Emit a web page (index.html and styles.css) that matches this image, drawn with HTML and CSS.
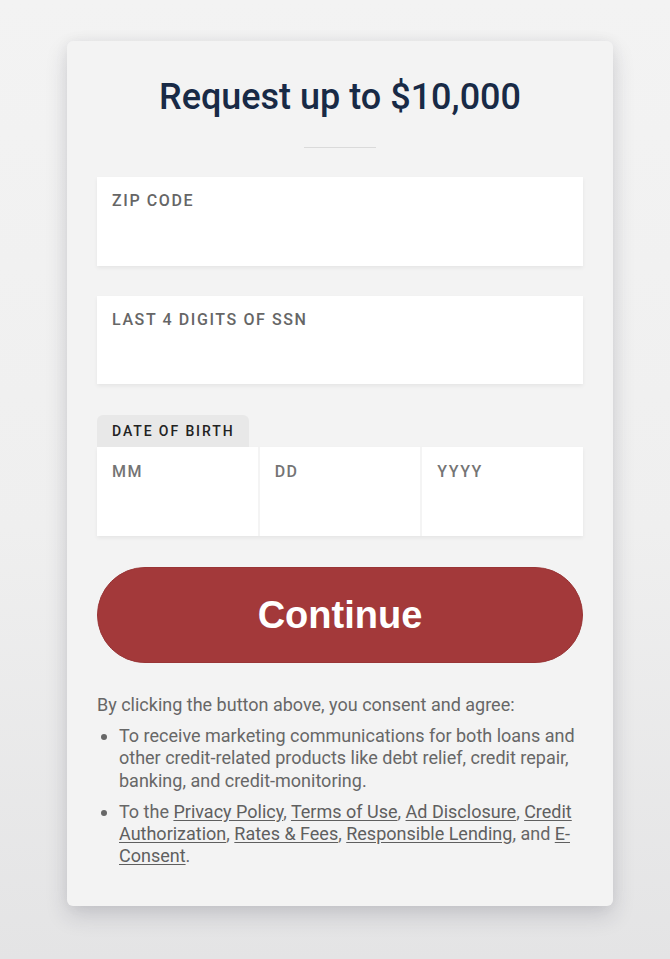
FILE: index.html
```html
<!DOCTYPE html>
<html lang="en">
<head>
<meta charset="utf-8">
<title>Request up to $10,000</title>
<link rel="stylesheet" href="styles.css">
</head>
<body>
<main class="page">
  <form class="card">
    <h1 class="title">Request up to $10,000</h1>
    <div class="divider"></div>

    <label class="field">
      <span class="field-label">ZIP CODE</span>
    </label>

    <label class="field field-ssn">
      <span class="field-label">LAST 4 DIGITS OF SSN</span>
    </label>

    <fieldset class="dob">
      <div class="dob-tab">DATE OF BIRTH</div>
      <div class="dob-row">
        <label class="dob-cell"><span class="dob-label">MM</span></label>
        <label class="dob-cell"><span class="dob-label">DD</span></label>
        <label class="dob-cell"><span class="dob-label">YYYY</span></label>
      </div>
    </fieldset>

    <button type="button" class="continue">Continue</button>

    <div class="consent">
      <p class="consent-lead">By clicking the button above, you consent and agree:</p>
      <ul class="consent-list">
        <li>To receive marketing communications for both loans and other credit-related products like debt relief, credit repair, banking, and credit-monitoring.</li>
        <li>To the <a href="#">Privacy Policy</a>, <a href="#">Terms of Use</a>, <a href="#">Ad Disclosure</a>, <a href="#">Credit Authorization</a>, <a href="#">Rates &amp; Fees</a>, <a href="#">Responsible Lending</a>, and <a href="#">E-Consent</a>.</li>
      </ul>
    </div>
  </form>
</main>
</body>
</html>
```

FILE: styles.css
```css
* {
  box-sizing: border-box;
}

html, body {
  margin: 0;
  padding: 0;
}

body {
  min-height: 959px;
  background: linear-gradient(to bottom, #f3f3f3 0%, #efefef 55%, #e4e4e5 100%);
  font-family: Roboto, "Noto Sans", "Liberation Sans", sans-serif;
}

.page {
  display: flex;
  justify-content: center;
  padding: 41px 0 0 10px;
}

.card {
  width: 546px;
  padding: 35px 30px 38px;
  background: #f3f3f3;
  border-radius: 6px;
  box-shadow: 0 10px 22px rgba(40, 40, 60, 0.16), 0 0 14px rgba(0, 0, 0, 0.05);
  display: flex;
  flex-direction: column;
}

.title {
  margin: 0;
  font-size: 36px;
  line-height: 43px;
  font-weight: 500;
  color: #182a46;
  text-align: center;
}

.divider {
  width: 72px;
  height: 1px;
  margin: 28px auto 29px;
  background: #dadada;
}

.field {
  display: block;
  height: 89px;
  padding: 14px 15px 0;
  background: #ffffff;
  box-shadow: 0 2px 4px rgba(0, 0, 0, 0.06);
}

.field-ssn {
  margin-top: 30px;
  height: 88px;
}

.field-label {
  display: block;
  font-size: 16px;
  line-height: 19px;
  font-weight: 500;
  letter-spacing: 1.6px;
  color: #666666;
}

.dob {
  margin: 31px 0 0;
  padding: 0;
  border: 0;
  min-width: 0;
}

.dob-tab {
  display: inline-block;
  height: 32px;
  padding: 0 15px;
  font-size: 14px;
  line-height: 32px;
  font-weight: 500;
  letter-spacing: 1.9px;
  color: #222222;
  background: #e8e8e8;
  border-radius: 6px 6px 0 0;
  vertical-align: top;
}

.dob-row {
  display: grid;
  grid-template-columns: 1fr 1fr 1fr;
  gap: 2px;
  background: #f4f4f4;
  box-shadow: 0 2px 4px rgba(0, 0, 0, 0.06);
}

.dob-cell {
  display: block;
  height: 89px;
  padding: 15px 15px 0;
  background: #ffffff;
}

.dob-label {
  display: block;
  font-size: 16px;
  line-height: 19px;
  font-weight: 500;
  letter-spacing: 1.5px;
  color: #747474;
}

.continue {
  margin-top: 31px;
  height: 96px;
  width: 100%;
  border: 1px solid #993536;
  border-radius: 48px;
  background: #a3393a;
  color: #ffffff;
  font-family: "Liberation Sans", Arial, sans-serif;
  font-size: 38px;
  font-weight: 700;
  line-height: 94px;
  padding: 0;
  cursor: pointer;
}

.consent {
  margin-top: 31px;
  font-size: 18px;
  line-height: 22.4px;
  color: #676767;
}

.consent-lead {
  margin: 0;
}

.consent-list {
  margin: 8.6px 0 0;
  padding-left: 22px;
}

.consent-list li + li {
  margin-top: 8.3px;
}

.consent-list a {
  color: #5f5f5f;
  text-decoration: underline;
  text-underline-offset: 2px;
}
```
